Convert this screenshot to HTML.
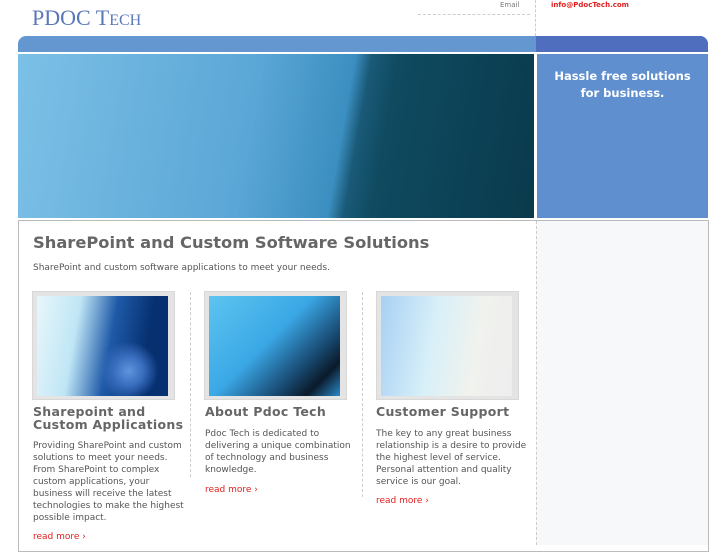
<!DOCTYPE html>
<html><head><style>
body{margin:0;width:727px;height:545px;overflow:hidden;background:#fff;font-family:"DejaVu Sans",sans-serif;position:relative}
.a{position:absolute}
.p{font-size:9px;line-height:12px;color:#555}
.h{font-size:12.5px;font-weight:bold;color:#666;line-height:13px;letter-spacing:.3px}
.rm{font-size:9px;color:#e02020}
.img{border:1px solid #d8d8d8;background:#e4e4e4;width:141px;height:107px}
.img div{margin:4px;width:131px;height:100px}
</style></head><body>
<div class="a" style="left:32px;top:5px;font-family:'Liberation Serif',serif;font-size:22px;color:#5a78b8">PDOC T<span style="font-size:16px">ECH</span></div>
<div class="a" style="left:500px;top:1px;font-size:7px;color:#777">Email</div>
<div class="a" style="left:418px;top:14px;width:112px;border-top:1px dashed #ccc"></div>
<div class="a" style="left:535px;top:0;height:36px;border-left:1px dashed #ccc"></div>
<div class="a" style="left:551px;top:1px;font-size:7px;color:#e02020;font-weight:bold">info@PdocTech.com</div>
<div class="a" style="left:18px;top:36px;width:690px;height:16px;background:#6497d0;border-radius:8px 8px 0 0;overflow:hidden"><div style="position:absolute;left:518px;top:0;width:172px;height:16px;background:#4f6fbe"></div></div>
<div class="a" style="left:18px;top:54px;width:516px;height:164px;background:linear-gradient(100deg,#7cc0e6 0%,#5aa6d6 45%,#3b8fc0 62%,#1a5a78 65%,#0f4a60 70%,#0a3a4c 100%)"></div>
<div class="a" style="left:537px;top:54px;width:171px;height:164px;background:#5f8fcf;color:#fff;font-weight:bold;font-size:11.5px;line-height:17px;text-align:center;padding-top:14px;box-sizing:border-box">Hassle free solutions<br>for business.</div>
<div class="a" style="left:18px;top:220px;width:689px;height:330px;border:1px solid #bbb;background:#fff"></div>
<div class="a" style="left:536px;top:221px;width:171px;height:324px;background:#f7f8fa;border-left:1px dashed #ccc"></div>
<div class="a" style="left:33px;top:233px;font-size:16.3px;font-weight:bold;color:#666">SharePoint and Custom Software Solutions</div>
<div class="a p" style="left:33px;top:262px">SharePoint and custom software applications to meet your needs.</div>
<div class="a" style="left:190px;top:292px;height:185px;border-left:1px dashed #ccc"></div>
<div class="a" style="left:362px;top:292px;height:205px;border-left:1px dashed #ccc"></div>
<div class="a img" style="left:32px;top:291px"><div style="background:radial-gradient(circle at 70% 75%,#5f94dc 0,#3a6fc0 12%,transparent 25%),linear-gradient(100deg,#e8f6fb 0%,#bfe6f5 30%,#1f5aa8 55%,#063070 80%)"></div></div>
<div class="a img" style="left:204px;top:291px"><div style="background:linear-gradient(135deg,#5ec4f0 0%,#3aa8e6 45%,#1a4e78 70%,#0a1a2a 85%,#2a8ac8 100%)"></div></div>
<div class="a img" style="left:376px;top:291px"><div style="background:linear-gradient(100deg,#a8d0f4 0%,#d8f0f8 40%,#f0f2ee 70%,#eeeeee 100%)"></div></div>
<div class="a h" style="left:33px;top:405px">Sharepoint and<br>Custom Applications</div>
<div class="a p" style="left:33px;top:440px">Providing SharePoint and custom<br>solutions to meet your needs.<br>From SharePoint to complex<br>custom applications, your<br>business will receive the latest<br>technologies to make the highest<br>possible impact.</div>
<div class="a rm" style="left:33px;top:532px">read more ›</div>
<div class="a h" style="left:205px;top:405px">About Pdoc Tech</div>
<div class="a p" style="left:205px;top:428px">Pdoc Tech is dedicated to<br>delivering a unique combination<br>of technology and business<br>knowledge.</div>
<div class="a rm" style="left:205px;top:485px">read more ›</div>
<div class="a h" style="left:376px;top:405px">Customer Support</div>
<div class="a p" style="left:376px;top:428px">The key to any great business<br>relationship is a desire to provide<br>the highest level of service.<br>Personal attention and quality<br>service is our goal.</div>
<div class="a rm" style="left:376px;top:496px">read more ›</div>
</body></html>
